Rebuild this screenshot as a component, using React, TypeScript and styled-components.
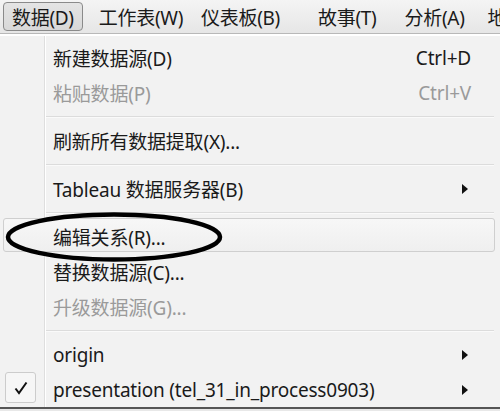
import React from "react";
import styled, { createGlobalStyle } from "styled-components";

const GlobalStyle = createGlobalStyle`
  html, body {
    margin: 0;
    padding: 0;
    background: #ffffff;
  }
  body {
    font-family: "Noto Sans", "Noto Sans CJK SC", sans-serif;
    width: 500px;
    height: 411px;
    overflow: hidden;
  }
`;

const Page = styled.div`
  position: relative;
  width: 500px;
  height: 411px;
  overflow: hidden;
  background: #ffffff;
`;

const MenuBar = styled.div`
  display: flex;
  align-items: center;
  height: 34px;
  padding-left: 3px;
  background: linear-gradient(#f4f4f4, #e6e6e6);
  border-bottom: 1px solid #b8b8b8;
  box-sizing: border-box;
`;

const BarItem = styled.div<{ $open?: boolean; $gap: number }>`
  display: flex;
  align-items: center;
  height: 29px;
  padding: 0 ${(p) => (p.$open ? 8 : 6)}px;
  margin-right: ${(p) => p.$gap}px;
  font-size: 19px;
  letter-spacing: -0.3px;
  color: #1a1a1a;
  white-space: nowrap;
  box-sizing: border-box;
  border: 1px solid ${(p) => (p.$open ? "#8a8a8a" : "transparent")};
  border-radius: 4px;
  background: ${(p) => (p.$open ? "linear-gradient(#e4e4e4, #d8d8d8)" : "transparent")};
`;

const Dropdown = styled.div`
  margin-top: 2px;
  padding-top: 4px;
  background: #f2f2f2;
  border-bottom: 2px solid #555;
  position: relative;
`;

const Gutter = styled.div`
  position: absolute;
  left: 44px;
  top: 0;
  bottom: 0;
  width: 1px;
  background: #dedede;
  border-right: 1px solid #ffffff;
`;

const Row = styled.div<{ $disabled?: boolean }>`
  position: relative;
  display: flex;
  align-items: center;
  height: 35px;
  padding-left: 53px;
  padding-right: 29px;
  font-size: 19px;
  letter-spacing: -0.2px;
  color: ${(p) => (p.$disabled ? "#9a9a9a" : "#1a1a1a")};
  white-space: nowrap;
  box-sizing: border-box;
`;

const HoverBox = styled.div`
  position: absolute;
  left: 3px;
  right: 5px;
  top: -1px;
  bottom: 2px;
  border: 1px solid #cfcfcf;
  border-radius: 3px;
  background: linear-gradient(#f7f7f7, #efefef);
`;

const Label = styled.span`
  position: relative;
  flex: 1;
`;

const Shortcut = styled.span`
  position: relative;
`;

const Arrow = styled.span`
  position: relative;
  width: 0;
  height: 0;
  margin-right: 3px;
  border-top: 5px solid transparent;
  border-bottom: 5px solid transparent;
  border-left: 6px solid #111;
`;

const Separator = styled.div`
  height: 13px;
  display: flex;
  align-items: center;
  padding-left: 46px;
  padding-right: 6px;
  &::after {
    content: "";
    flex: 1;
    height: 1px;
    background: #dcdcdc;
    border-bottom: 1px solid #fafafa;
  }
`;

const CheckBox = styled.div`
  position: absolute;
  left: 5px;
  top: 0;
  width: 31px;
  height: 31px;
  box-sizing: border-box;
  border: 1px solid #cccccc;
  border-radius: 3px;
  background: #f6f6f6;
  display: flex;
  align-items: center;
  justify-content: center;
`;

const Under = styled.div`
  height: 4px;
  background: #e8e8e8;
`;

const Mark = styled.svg`
  position: absolute;
  left: 0;
  top: 0;
  pointer-events: none;
`;

const bar = [
  { t: "数据(D)", open: true, gap: 9 },
  { t: "工作表(W)", gap: 4 },
  { t: "仪表板(B)", gap: 24 },
  { t: "故事(T)", gap: 14 },
  { t: "分析(A)", gap: 9 },
  { t: "地", gap: 0 },
];

export default function App() {
  return (
    <Page>
      <GlobalStyle />
      <MenuBar>
        {bar.map((b) => (
          <BarItem key={b.t} $open={b.open} $gap={b.gap}>
            {b.t}
          </BarItem>
        ))}
      </MenuBar>
      <Dropdown>
        <Gutter />
        <Row>
          <Label>新建数据源(D)</Label>
          <Shortcut>Ctrl+D</Shortcut>
        </Row>
        <Row $disabled>
          <Label>粘贴数据(P)</Label>
          <Shortcut>Ctrl+V</Shortcut>
        </Row>
        <Separator />
        <Row>
          <Label>刷新所有数据提取(X)...</Label>
        </Row>
        <Separator />
        <Row>
          <Label>Tableau 数据服务器(B)</Label>
          <Arrow />
        </Row>
        <Separator />
        <Row>
          <HoverBox />
          <Label>编辑关系(R)...</Label>
        </Row>
        <Row>
          <Label>替换数据源(C)...</Label>
        </Row>
        <Row $disabled>
          <Label>升级数据源(G)...</Label>
        </Row>
        <Separator />
        <Row>
          <Label>origin</Label>
          <Arrow />
        </Row>
        <Row>
          <CheckBox>
            <svg width="16" height="16" viewBox="0 0 16 16">
              <path d="M2.5 8.5 L6 13 L13.5 2.5" fill="none" stroke="#111" strokeWidth="2" strokeLinejoin="miter" />
            </svg>
          </CheckBox>
          <Label>presentation (tel_31_in_process0903)</Label>
          <Arrow />
        </Row>
      </Dropdown>
      <Under />
      <Mark width="500" height="411">
        <ellipse cx="114" cy="237" rx="106" ry="22.5" fill="none" stroke="#000" strokeWidth="4.5" />
      </Mark>
    </Page>
  );
}
